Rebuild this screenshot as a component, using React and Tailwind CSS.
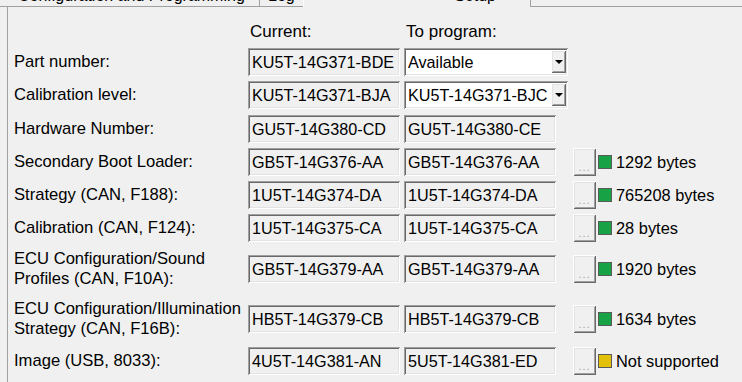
import React from "react";

const sunken =
  "shadow-[inset_1px_1px_0_#a0a0a0,inset_-1px_-1px_0_#ffffff,inset_2px_2px_0_#696969,inset_-2px_-2px_0_#e3e3e3]";
const raised =
  "shadow-[inset_1px_1px_0_#ffffff,inset_-1px_-1px_0_#696969,inset_2px_2px_0_#e3e3e3,inset_-2px_-2px_0_#a0a0a0]";

function Box({ text, white }) {
  return (
    <div
      className={`h-[28px] w-[152px] flex items-center pl-[4px] whitespace-nowrap overflow-hidden text-[16.2px] ${sunken} ${
        white ? "bg-white" : "bg-[#f0f0f0]"
      }`}
    >
      {text}
    </div>
  );
}

function Combo({ text }) {
  return (
    <div className={`h-[28px] w-[164px] flex items-stretch p-[2px] bg-white text-[16.2px] ${sunken}`}>
      <div className="flex-1 flex items-center pl-[2px] whitespace-nowrap overflow-hidden">{text}</div>
      <div className={`w-[15px] mb-[1px] bg-[#f0f0f0] flex items-center justify-center ${raised}`}>
        <div className="w-0 h-0 border-l-[4px] border-r-[4px] border-t-[4px] border-l-transparent border-r-transparent border-t-black mt-[1px]" />
      </div>
    </div>
  );
}

function Extra({ color, text }) {
  return (
    <div className="flex items-center ml-[17px]">
      <div className={`w-[23px] h-[28px] bg-[#f0f0f0] flex items-end justify-center pb-[3px] ${raised}`}>
        <span className="text-[11px] leading-[11px] text-[#a0a0a0] tracking-[1px]">...</span>
      </div>
      <div className={`ml-[2px] w-[14px] h-[14px] border border-[#5a5a5a] ${color}`} />
      <div className="ml-[4px] whitespace-nowrap text-[16.4px]">{text}</div>
    </div>
  );
}

const rows = [
  { mt: "mt-[6px]", label: ["Part number:"], cur: "KU5T-14G371-BDE", combo: "Available" },
  { mt: "mt-[5px]", label: ["Calibration level:"], cur: "KU5T-14G371-BJA", combo: "KU5T-14G371-BJC" },
  { mt: "mt-[6px]", label: ["Hardware Number:"], cur: "GU5T-14G380-CD", prog: "GU5T-14G380-CE" },
  { mt: "mt-[5px]", label: ["Secondary Boot Loader:"], cur: "GB5T-14G376-AA", prog: "GB5T-14G376-AA", color: "bg-[#17a345]", info: "1292 bytes" },
  { mt: "mt-[5px]", label: ["Strategy (CAN, F188):"], cur: "1U5T-14G374-DA", prog: "1U5T-14G374-DA", color: "bg-[#17a345]", info: "765208 bytes" },
  { mt: "mt-[5px]", label: ["Calibration (CAN, F124):"], cur: "1U5T-14G375-CA", prog: "1U5T-14G375-CA", color: "bg-[#17a345]", info: "28 bytes" },
  { mt: "mt-[13px]", label: ["ECU Configuration/Sound", "Profiles (CAN, F10A):"], cur: "GB5T-14G379-AA", prog: "GB5T-14G379-AA", color: "bg-[#17a345]", info: "1920 bytes" },
  { mt: "mt-[22px]", label: ["ECU Configuration/Illumination", "Strategy (CAN, F16B):"], cur: "HB5T-14G379-CB", prog: "HB5T-14G379-CB", color: "bg-[#17a345]", info: "1634 bytes" },
  { mt: "mt-[14px]", label: ["Image (USB, 8033):"], cur: "4U5T-14G381-AN", prog: "5U5T-14G381-ED", color: "bg-[#e3c10b]", info: "Not supported" },
];

export default function App() {
  return (
    <div className="w-[742px] h-[382px] bg-[#f0f0f0] overflow-hidden flex flex-col text-black text-[16px] font-['Liberation_Sans',Arial,sans-serif]">
      {/* tab strip (mostly scrolled out of view) */}
      <div className="h-[7px] flex shrink-0 overflow-hidden">
        <div className="w-[7px] border-b border-[#a0a0a0]" />
        <div className="w-[253px] border-b border-r border-[#a0a0a0] pl-[11px] whitespace-nowrap">
          <div className="leading-[16px] mt-[-12px]">Configuration and Programming</div>
        </div>
        <div className="w-[43px] border-b border-[#a0a0a0] pl-[8px] whitespace-nowrap">
          <div className="leading-[16px] mt-[-12px]">Log</div>
        </div>
        <div className="w-[228px] border-l border-r border-l-white border-r-[#a0a0a0] whitespace-nowrap flex justify-end pr-[34px]">
          <div className="leading-[16px] mt-[-12px]">Setup</div>
        </div>
        <div className="flex-1 border-b border-[#a0a0a0]" />
      </div>

      {/* panel */}
      <div className="flex-1 ml-[7px] border-l border-[#a0a0a0] pl-[6px] pt-[15px] flex flex-col">
        <div className="h-[20px] flex items-center leading-[20px] text-[17px]">
          <div className="w-[236px]" />
          <div className="w-[156px]">Current:</div>
          <div>To program:</div>
        </div>
        {rows.map((r, i) => (
          <div key={i} className={`h-[28px] flex items-center ${r.mt}`}>
            <div className="w-[234px] leading-[20px] whitespace-nowrap text-[16.6px]">
              {r.label.map((l, j) => (
                <div key={j}>{l}</div>
              ))}
            </div>
            <Box text={r.cur} />
            <div className="ml-[4px]">
              {r.combo ? <Combo text={r.combo} /> : <Box text={r.prog} />}
            </div>
            {r.info && <Extra color={r.color} text={r.info} />}
          </div>
        ))}
      </div>
    </div>
  );
}
